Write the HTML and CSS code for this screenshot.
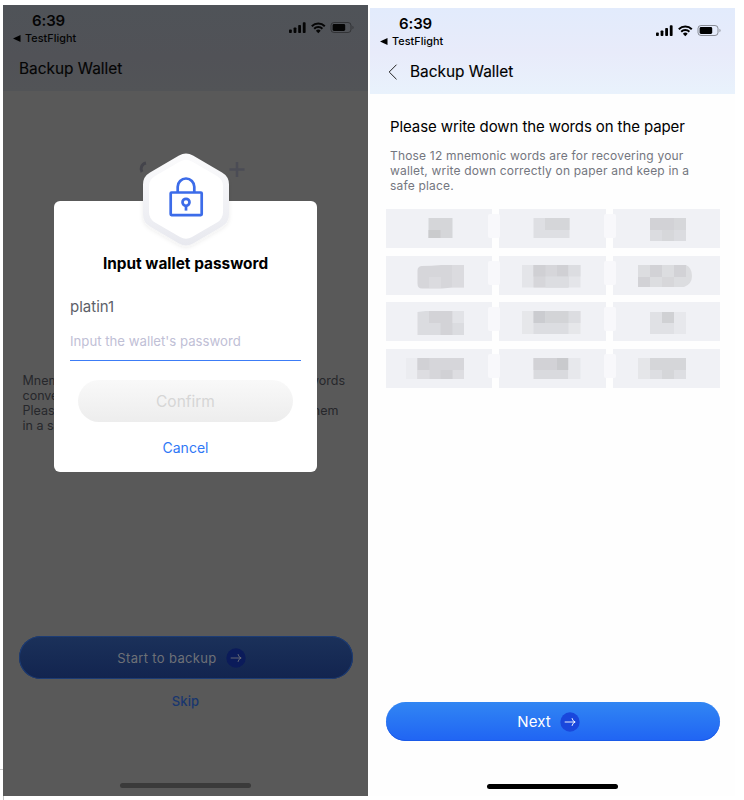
FILE: index.html
```html
<!DOCTYPE html>
<html lang="en">
<head>
<meta charset="utf-8">
<title>Backup Wallet</title>
<link rel="stylesheet" href="styles.css">
</head>
<body>
<svg width="0" height="0" class="defs">
  <symbol id="status" viewBox="0 0 66 14">
    <rect x="0" y="8.5" width="2.8" height="3.5" rx=".8"/><rect x="4.6" y="6.5" width="2.8" height="5.5" rx=".8"/><rect x="9.2" y="4" width="2.8" height="8" rx=".8"/><rect x="13.8" y="1.3" width="2.8" height="10.7" rx=".8"/>
    <path d="M22.8 5.2a9.3 9.3 0 0 1 13 0M25.2 7.8a5.8 5.8 0 0 1 8.2 0" fill="none" stroke="currentColor" stroke-width="2"/>
    <path d="M26.9 9.7a3.4 3.4 0 0 1 4.8 0L29.3 12.2z"/>
    <rect x="42" y="1.5" width="20" height="10" rx="3" fill="none" stroke="currentColor" stroke-opacity=".4"/>
    <rect x="43.6" y="3" width="12.6" height="7" rx="1.4"/>
    <path d="M63.5 4.8c1.4.6 1.4 2.8 0 3.4z" opacity=".4"/>
  </symbol>
  <symbol id="arrow" viewBox="0 0 20 20">
    <circle cx="10" cy="10" r="9.7"/>
    <path d="M4.7 10h10.2M12 6.1q.5 3.1 3.2 3.9q-2.700.8-3.200 3.900" fill="none" stroke="currentColor" stroke-width=".9"/>
  </symbol>
</svg>
<main class="stage">
  <section class="phone phone-dim">
    <header class="head">
      <div class="clock">6:39</div>
      <svg class="status"><use href="#status"/></svg>
      <div class="back-app"><svg viewBox="0 0 8 7"><path d="M0 3.500L7.500 0v7z"/></svg>TestFlight</div>
      <h1>Backup Wallet</h1>
    </header>
    <svg class="art" viewBox="0 0 120 30"><path d="M6 20a6 6 0 0 1 4-9" fill="none" stroke="#44444b" stroke-width="3"/><path d="M101 10v15M93.500 17.500h15" stroke="#4b4c55" stroke-width="2.500"/></svg>
    <p class="info"><span>Mnemonic words are the</span><span>words</span><span>converted key.</span><span></span><span>Please write down</span><span class="them">them</span><span>in a safe place.</span><span></span></p>
    <button class="btn btn-dim">Start to backup<svg><use href="#arrow"/></svg></button>
    <a class="skip">Skip</a>
    <div class="home"></div>
    <div class="dialog">
      <svg class="badge" viewBox="0 0 98 108">
        <defs>
          <linearGradient id="hex" x2="0" y2="1"><stop stop-color="#fbfbfc"/><stop offset="1" stop-color="#e8e9ef"/></linearGradient>
          <filter id="soft" x="-20%" y="-20%" width="140%" height="140%"><feDropShadow dx="0" dy="2" stdDeviation="2" flood-color="#30344a" flood-opacity=".08"/></filter>
        </defs>
        <path filter="url(#soft)" fill="url(#hex)" d="M42 7.500q7-4 14 0l29 17q7 4 7 12v30q0 8-7 12l-29 17q-7 4-14 0l-29-17q-7-4-7-12v-30q0-8 7-12z"/>
        <path fill="#fff" d="M43 13.500q6-3.500 12 0l25 14.500q6 3.500 6 10v26q0 7-6 10.500l-25 14.500q-6 3.500-12 0l-25-14.500q-6-3.500-6-10.500v-26q0-6.500 6-10z"/>
        <g transform="translate(0 .8)" fill="none" stroke="#3c6ce9" stroke-width="2.700"><rect x="33.700" y="43.700" width="31" height="22.600" rx=".8"/><path d="M40.700 43.500v-5.500a8.300 8.300 0 0 1 16.600 0v5.500"/><circle cx="49" cy="53.500" r="3.500"/><path d="M49 57v4.800"/></g>
      </svg>
      <h2>Input wallet password</h2>
      <div class="wallet">platin1</div>
      <div class="field">Input the wallet's password</div>
      <button class="confirm">Confirm</button>
      <a class="cancel">Cancel</a>
    </div>
  </section>
  <section class="phone phone-light">
    <header class="head">
      <div class="clock">6:39</div>
      <svg class="status"><use href="#status"/></svg>
      <div class="back-app"><svg viewBox="0 0 8 7"><path d="M0 3.500L7.500 0v7z"/></svg>TestFlight</div>
      <h1><svg class="chev" viewBox="0 0 10 16"><path d="M8.500.7L1.200 8l7.300 7.300" fill="none" stroke="#222" stroke-width="1"/></svg>Backup Wallet</h1>
    </header>
    <h3>Please write down the words on the paper</h3>
    <p class="note">Those 12 mnemonic words are for recovering your<br>wallet, write down correctly on paper and keep in a<br>safe place.</p>
    <div class="words">
      <svg viewBox="0 0 106.500 39"><path fill="#d5d6d9" d="M42.500 9h24v20h-24z"/><path fill="#cacbcd" d="M42.500 21h12v8h-12z"/></svg>
      <svg viewBox="0 0 106.500 39"><path fill="#dedfe3" d="M34.500 9h36v20h-36z"/><path fill="#d5d6d9" d="M46 9h24.500v12h-24.500z"/></svg>
      <svg viewBox="0 0 106.500 39"><path fill="#dbdce0" d="M37 9h36v23h-36z"/><path fill="#d2d2d6" d="M37 9h24v12h-24z"/><path fill="#d6d7da" d="M61 9h12v12h-12zM49 21h12v11h-12z"/></svg>
      <svg viewBox="0 0 106.500 39"><path fill="#d6d6da" d="M35.500 10q10 0 20-1h22.500v22.500h-11l-11 1h-20q-4.500 0-4.500-5v-13q0-4 4-4.500z"/><path fill="#dbdbdf" d="M66 9h12v12h-12zM43 21h12v11h-12zM66 21h12v10h-12z"/></svg>
      <svg viewBox="0 0 106.500 39"><path fill="#e4e5e9" d="M23 9h58.500v22.500h-58.500z"/><path fill="#d6d6da" d="M34.500 9h35v22.500h-35z"/><path fill="#d0d0d4" d="M34.500 9h12v11.500h-12zM58 9h11.500v11.500h-11.500z"/><path fill="#dcdde1" d="M69.500 9h12v11.500h-12zM46.500 20.500h23v11h-23z"/></svg>
      <svg viewBox="0 0 106.500 39"><path fill="#dcdde0" d="M25 9h48q6 3 6 11t-8 11h-46z"/><path fill="#d2d2d6" d="M37 9h12v12h-12zM61 9h12v12h-12zM25 21h12v10h-12z"/><path fill="#d7d7da" d="M49 21h12v10h-12z"/></svg>
      <svg viewBox="0 0 106.500 39"><path fill="#dbdce0" d="M31.500 10l8-1h38.500v24h-46.500z"/><path fill="#d3d3d7" d="M43 9h23.500v12h-23.500zM54.500 21h12v12h-12z"/><path fill="#e2e3e7" d="M66.500 9h11.500v12h-11.500z"/></svg>
      <svg viewBox="0 0 106.500 39"><path fill="#e6e7ea" d="M23 9h58.500v23h-58.500z"/><path fill="#dcdde1" d="M34.500 9h35v23h-35zM69.500 9h12v12h-12z"/><path fill="#cbccd0" d="M34.500 9h12v12h-12z"/><path fill="#d3d4d7" d="M46.500 9h23v12h-23z"/></svg>
      <svg viewBox="0 0 106.500 39"><path fill="#e0e1e5" d="M37 10h24v22h-24z"/><path fill="#d0d1d4" d="M49 10h12v11h-12z"/><path fill="#e7e8ec" d="M61 10h12v22h-12z"/></svg>
      <svg viewBox="0 0 106.500 39"><path fill="#ebecf0" d="M20 9h12v21h-12z"/><path fill="#d6d6da" d="M31.500 9h46.500v21h-46.500z"/><path fill="#dddde1" d="M31.500 21h12v9h-12zM66.500 21h11.500v9h-11.500z"/><path fill="#d1d1d5" d="M31.500 9h12v12h-12zM54.500 21h12v9h-12z"/></svg>
      <svg viewBox="0 0 106.500 39"><path fill="#d9dade" d="M34.500 9h35v21h-35z"/><path fill="#d2d2d6" d="M34.500 9h24v12h-24z"/><path fill="#c9cacd" d="M58 9h11.500v12h-11.500z"/><path fill="#e7e8ec" d="M69.500 9h12v21h-12z"/></svg>
      <svg viewBox="0 0 106.500 39"><path fill="#e5e6e9" d="M25 9h12v21h-12z"/><path fill="#d5d6d9" d="M37 9h36v12h-36zM49 21h12v9h-12z"/><path fill="#dddee2" d="M37 21h12v9h-12zM61 21h12v9h-12z"/></svg>
      <div class="seam seam-a"><i></i><i></i><i></i><i></i></div>
      <div class="seam seam-b"><i></i><i></i><i></i><i></i></div>
    </div>
    <button class="btn">Next<svg><use href="#arrow"/></svg></button>
    <div class="home"></div>
  </section>
</main>
</body>
</html>
```
FILE: styles.css
```css
* { box-sizing: border-box; }
body { margin: 0; background: #fff; font-family: Inter, "Liberation Sans", sans-serif; color: #000; }
.defs { position: absolute; }
h1, h2, h3, p { margin: 0; font-weight: 400; }
button { border: 0; font: inherit; display: block; padding: 0; }
.stage { display: flex; gap: 2px; padding: 5px 0 0 3px; height: 800px; position: relative; }
.stage::before { content: ""; position: absolute; left: 0; top: 769px; width: 3px; height: 1px; background: #c6c6c6; }
.stage::after { content: ""; position: absolute; left: 3px; top: 796px; width: 1px; height: 4px; background: #c6c6c6; }
.phone { position: relative; width: 365px; height: 791px; display: flex; flex-direction: column; align-items: center; }
.phone-dim { background: #595959; }
.phone-light { margin-top: 3px; height: 788px; background: #fefefe; }
.head { width: 100%; height: 86px; flex: none; display: grid; grid-template-columns: 1fr auto; grid-template-rows: 30px 6px 50px; background: linear-gradient(#e2ebfc, #e8ebfa 52%, #e9f2fc); }
.phone-dim .head { background: linear-gradient(#4f5358, #515257 60%, #525457); color: #050505; }
.clock { padding-left: 29px; font-size: 15px; font-weight: 600; line-height: 31px; letter-spacing: -.1px; }
.status { width: 66px; height: 14px; margin: 16px 13px 0 0; fill: currentColor; }
.back-app { grid-column: 1 / 3; padding-left: 10px; font-size: 10.800px; line-height: 7px; font-weight: 500; letter-spacing: .05px; display: flex; align-items: center; gap: 4px; }
.back-app svg { width: 8px; height: 7px; }
.head h1 { grid-column: 1 / 3; padding: 5px 0 0 16px; font-size: 15.400px; font-weight: 400; line-height: 41px; display: flex; align-items: center; -webkit-text-stroke: .15px currentColor; }
.phone-light .head h1 { padding-left: 18px; }
.chev { width: 10px; height: 16px; margin-right: 12px; }
.art { width: 120px; height: 30px; margin: 61px 0 0 20px; }
.info { width: 323px; margin: 191px 3px 0 0; font-size: 12.500px; line-height: 15px; color: #26272b; display: grid; grid-template-columns: 1fr auto; }
.them { text-align: right; padding-right: 7px; }
.btn { width: 334px; height: 39px; border-radius: 20px; background: linear-gradient(#3186f3, #2064f3); box-shadow: inset 0 -1px #1a5ae8; color: #fff; font-size: 15px; display: flex; align-items: center; justify-content: center; gap: 9px; flex: none; letter-spacing: .1px; margin-top: 314px; padding: 0 8px 0 0; }
.btn svg { width: 20px; height: 20px; fill: #1947dc; }
.btn-dim { margin-top: 203px; height: 43px; border-radius: 22px; background: linear-gradient(#1b315a, #12244f); box-shadow: inset 0 0 0 1px #1d3c74; color: #6e7177; font-size: 13px; letter-spacing: .35px; }
.btn-dim svg { fill: #0b1b5a; }
.skip { margin-top: 13px; font-size: 13px; font-weight: 500; line-height: 18px; color: #18366f; letter-spacing: .1px; }
.home { position: absolute; bottom: 7px; width: 131px; height: 5px; border-radius: 3px; background: #000; }
.phone-dim .home { background: #3a3a3a; bottom: 8px; }
.dialog { position: absolute; left: 51px; top: 196px; width: 263px; height: 271px; background: #fff; border-radius: 6px; display: flex; flex-direction: column; align-items: center; }
.badge { width: 98px; height: 108px; margin-top: -53px; flex: none; }
.dialog h2 { font-size: 15.400px; font-weight: 700; line-height: 18px; margin-top: -1px; }
.wallet { width: 231px; flex: none; margin-top: 25px; font-size: 15px; line-height: 18px; color: #5d5f68; }
.field { width: 231px; flex: none; height: 36px; margin-top: 9px; background: linear-gradient(#3c7cf6, #3c7cf6) bottom / 100% 1px no-repeat; font-size: 13.200px; line-height: 33px; color: #bfc0d6; }
.confirm { width: 215px; height: 42px; flex: none; margin-top: 19px; border-radius: 21px; background: linear-gradient(#f9f9f9, #ededed); color: #d6d6d6; font-size: 15.500px; }
.cancel { margin-top: 17px; font-size: 14px; line-height: 18px; color: #2f78f6; }
.phone-light h3 { align-self: flex-start; margin: 23px 0 0 20px; font-size: 15px; line-height: 20px; white-space: nowrap; letter-spacing: -.1px; }
.note { align-self: flex-start; margin: 11px 0 0 20px; font-size: 12px; line-height: 15px; color: #74767f; white-space: nowrap; letter-spacing: .18px; }
.words { position: relative; width: 334px; margin-top: 16px; display: grid; grid-template-columns: repeat(3, 106.500px); gap: 7.700px 7.250px; }
.words svg { width: 106.500px; height: 39px; background: #f0f1f5; display: block; }
.seam { position: absolute; top: 5px; width: 12px; display: flex; flex-direction: column; gap: 22.700px; }
.seam i { height: 24px; background: #f8f8fb; border-radius: 2px; }
.seam-a { left: 102px; }
.seam-b { left: 218px; }
```
